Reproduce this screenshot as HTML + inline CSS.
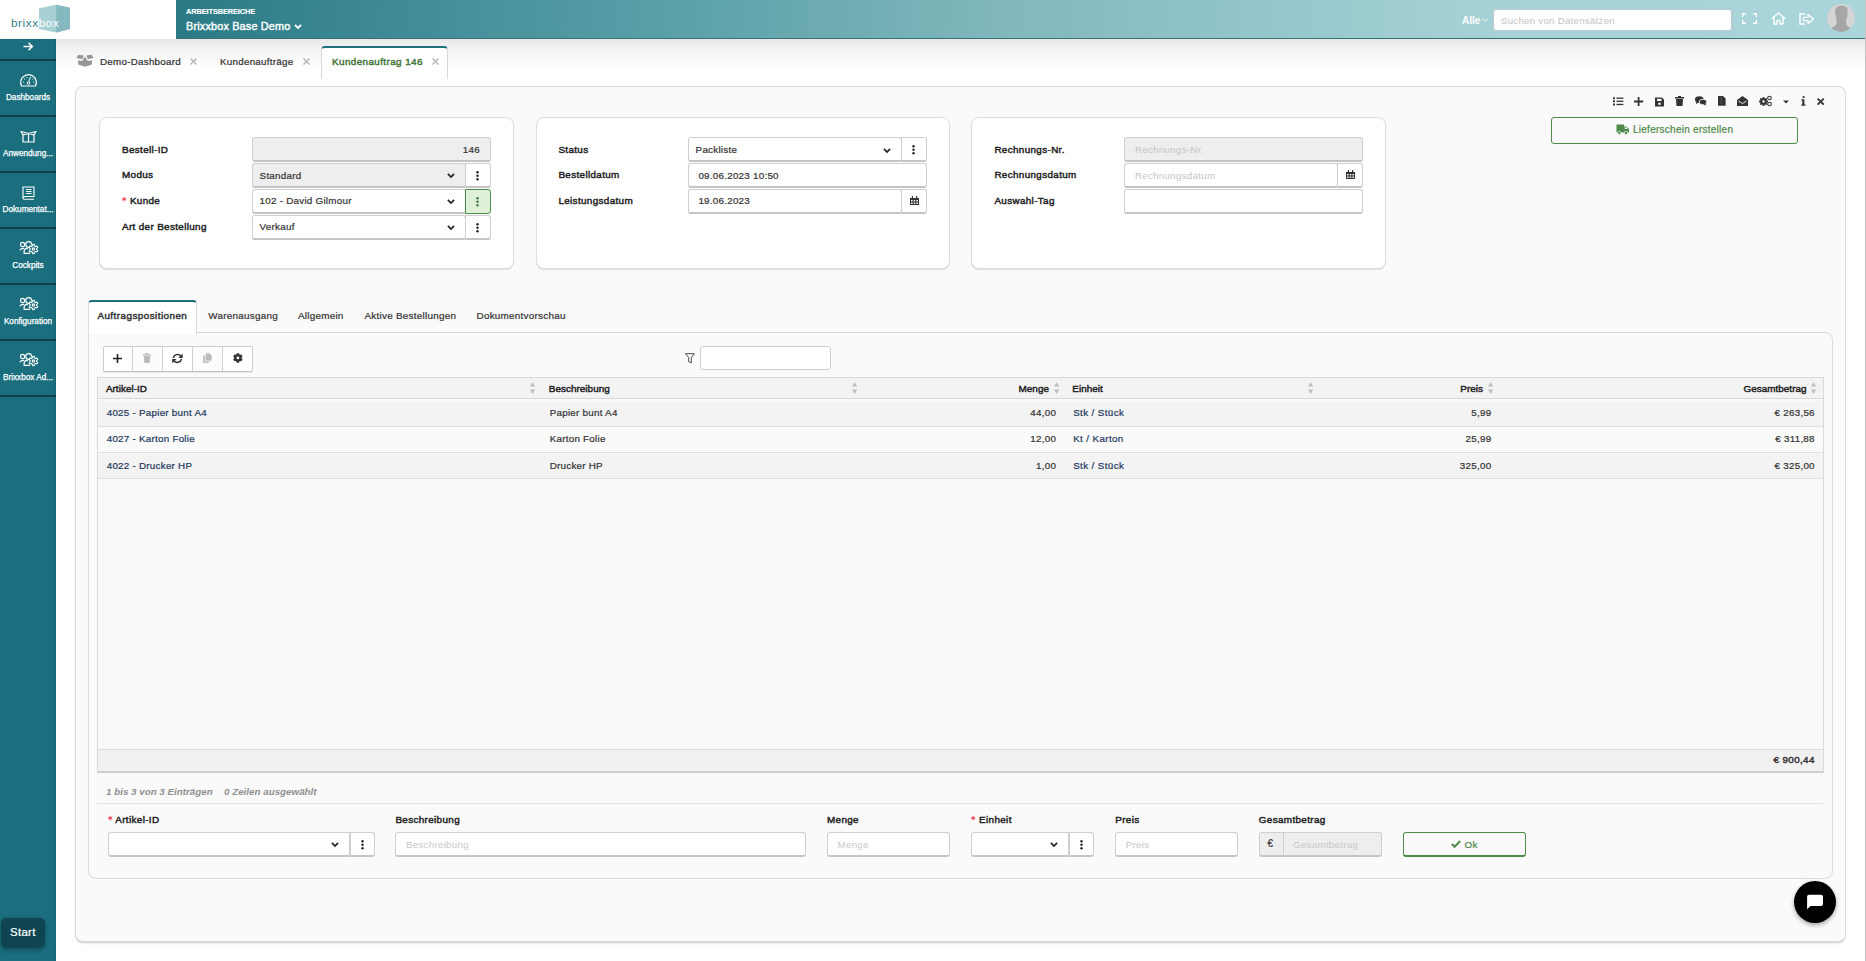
<!DOCTYPE html>
<html><head><meta charset="utf-8">
<style>
*{box-sizing:border-box;margin:0;padding:0}
html,body{width:1866px;height:961px;overflow:hidden;background:#fff;font-family:"Liberation Sans",sans-serif;color:#333;font-size:10.3px}
.a{position:absolute}
.t{position:absolute;white-space:nowrap;line-height:1}
#hdr{left:0;top:0;width:1866px;height:39px;background:linear-gradient(92deg,#2a7a86 176px,#529ba4 600px,#80b8bc 1000px,#a6d2d7 1500px,#aad5da 1866px);border-bottom:1px solid #3b6f77}
#logo{left:0;top:0;width:176px;height:39px;background:#fff}
#side{left:0;top:39px;width:56px;height:922px;background:#1a6e7e;border-right:1px solid #176777}
.sdiv{position:absolute;left:0;width:56px;height:2px;background:#0d3f4c}
.slab{position:absolute;left:0;width:56px;text-align:center;color:#fff;font-size:8.2px;white-space:nowrap;line-height:1;-webkit-text-stroke:0.25px #fff}
.sico{position:absolute;left:18px;width:20px;height:16px}
#tabbar{left:56px;top:39px;width:1810px;height:40px;background:linear-gradient(#e8e8e8,#f6f6f6 14px,#fff 30px)}
#outer{left:75px;top:86px;width:1771px;height:857px;background:#fafafa;border:1px solid #dcdcdc;border-bottom:2px solid #d8d8d8;border-radius:8px;box-shadow:0 1px 2px rgba(0,0,0,.08)}
.card{position:absolute;top:117px;width:414px;height:152px;background:#fff;border:1px solid #dedede;border-radius:8px;box-shadow:0 1px 1px rgba(0,0,0,.12)}
.lbl{position:absolute;font-weight:bold;font-size:9.7px;color:#222;white-space:nowrap;line-height:1}
.inp{position:absolute;height:25px;background:#fff;border:1px solid #cfcfcf;border-bottom:2px solid #c4c4c4;border-radius:3px}
.dis{background:#eee}
.btn{position:absolute;height:25px;width:26px;background:#fff;border:1px solid #cfcfcf;border-bottom:2px solid #c4c4c4;border-radius:0 3px 3px 0}
.ph{color:#c5c5c5}
svg{position:absolute;overflow:visible}
.t{-webkit-text-stroke:0.22px currentColor;font-size:9.8px;letter-spacing:0.26px;margin-top:-0.3px}
.lbl{font-weight:normal;font-size:9.9px;letter-spacing:0.35px;-webkit-text-stroke:0.45px currentColor}
.ph{-webkit-text-stroke:0}
.nb{-webkit-text-stroke:0;letter-spacing:0;margin-top:0}
</style></head><body>
<div id="hdr" class="a"></div>
<div id="logo" class="a">
  <svg style="left:0;top:0" width="80" height="39">
    <polygon points="39,8.3 56.2,4.7 70,7.8 70,29 56.2,32.5 39,29" fill="#a8d1d6"/>
    <polygon points="56.2,4.7 70,7.8 70,29 56.2,32.5" fill="#86b8bf"/>
  </svg>
  <div class="t nb" style="left:11px;top:17.5px;font-size:11.8px;color:#3a808c;letter-spacing:0.55px">brixx<span style="color:#fff">box</span></div>
</div>
<div class="t nb" style="left:186px;top:8px;font-size:7.4px;font-weight:bold;color:#fff;letter-spacing:-0.1px;-webkit-text-stroke:0.15px #fff">ARBEITSBEREICHE</div>
<div class="t" style="left:186px;top:21px;font-size:10.8px;letter-spacing:0.2px;color:#fff;-webkit-text-stroke:0.4px #fff">Brixxbox Base Demo</div>
<svg style="left:294px;top:23.5px" width="8" height="6"><path d="M1 1 L4 4 L7 1" stroke="#fff" stroke-width="1.8" fill="none"/></svg>

<div class="t nb" style="left:1462px;top:16.3px;font-size:10px;font-weight:bold;color:#fff">Alle</div>
<svg style="left:1482px;top:18px" width="7" height="5"><path d="M0.5 0.8 L3.2 3.5 L5.9 0.8" stroke="#fff" stroke-width="1" fill="none"/></svg>
<div class="a" style="left:1493px;top:8.8px;width:238.5px;height:22.5px;background:#fff;border:1px solid #b9c9cc;border-radius:3px"></div>
<div class="t ph" style="left:1501px;top:16.2px;font-size:9.7px;color:#c3c3c3">Suchen von Datensätzen</div>
<!-- fullscreen -->
<svg style="left:1742px;top:13px" width="15" height="11"><path d="M0.7 4 V0.7 H4 M11 0.7 H14.3 V4 M14.3 7 V10.3 H11 M4 10.3 H0.7 V7" stroke="#fff" stroke-width="1.4" fill="none"/></svg>
<!-- home -->
<svg style="left:1771px;top:12px" width="15" height="13"><path d="M1 6.5 L7.5 1 L14 6.5 M3 5 V12 H6 V8.5 H9 V12 H12 V5" stroke="#fff" stroke-width="1.4" fill="none" stroke-linejoin="round"/></svg>
<!-- sign out -->
<svg style="left:1799px;top:13px" width="16" height="12"><path d="M6 1 H1 V11 H6" stroke="#fff" stroke-width="1.4" fill="none"/><path d="M4.5 4.3 H9 V1.5 L14.5 6 L9 10.5 V7.7 H4.5 Z" stroke="#fff" stroke-width="1.3" fill="none" stroke-linejoin="round"/></svg>
<!-- avatar -->
<svg style="left:1827px;top:4px" width="28" height="28"><defs><clipPath id="avc"><circle cx="14" cy="14" r="13.9"/></clipPath></defs><circle cx="14" cy="14" r="13.9" fill="#d5d5d5"/><path clip-path="url(#avc)" d="M10 3 C12 1 18 1.2 19.8 3.5 C21 5.5 20.5 9 20.3 11 C20.8 12 20.2 13.5 19.5 14 C19.2 17 18.8 19.5 19.5 21 C20.5 22.5 22 23.2 24 24.5 L24 29 L4 29 L4 24.5 C6 23 8 22 9.3 20.5 C10 19 9.8 16.5 9.2 14.5 C8.5 12 8 9 8.3 6.5 C8.5 5 9 4 10 3 Z" fill="#a6a6a6"/></svg>

<div id="side" class="a"></div>
<svg style="left:23px;top:42px" width="11" height="9"><path d="M0.5 4.5 H9.5 M5.5 0.8 L9.3 4.5 L5.5 8.2" stroke="#fff" stroke-width="1.6" fill="none"/></svg>
<div class="sdiv" style="top:58.8px"></div>
<div class="sdiv" style="top:114.8px"></div>
<div class="sdiv" style="top:170.8px"></div>
<div class="sdiv" style="top:226.8px"></div>
<div class="sdiv" style="top:282.8px"></div>
<div class="sdiv" style="top:338.8px"></div>
<div class="sdiv" style="top:394.8px"></div>
<!-- dashboards icon -->
<svg style="left:20px;top:73.8px" width="17" height="13"><path d="M1.5 12 C0 9 0.5 4.5 3.5 2.5 C6.5 0.3 10.5 0.3 13.5 2.5 C16.5 4.5 17 9 15.5 12 Z" stroke="#fff" stroke-width="1.2" fill="none"/><circle cx="8.5" cy="9" r="1.3" stroke="#fff" stroke-width="1" fill="none"/><path d="M8.8 7.7 L10.5 3" stroke="#fff" stroke-width="1"/><circle cx="3.5" cy="8" r=".6" fill="#fff"/><circle cx="4.5" cy="5" r=".6" fill="#fff"/><circle cx="7" cy="3.5" r=".6" fill="#fff"/><circle cx="13" cy="5" r=".6" fill="#fff"/><circle cx="13.5" cy="8" r=".6" fill="#fff"/></svg>
<div class="slab" style="top:94.2px">Dashboards</div>
<!-- box icon -->
<svg style="left:20px;top:129.8px" width="17" height="13"><path d="M3 4 V12 H14 V4 M1 1.5 L8.5 3.5 L16 1.5 L14 5 L8.5 3.5 L3 5 Z M8.5 3.5 V12" stroke="#fff" stroke-width="1.2" fill="none" stroke-linejoin="round"/></svg>
<div class="slab" style="top:150.2px">Anwendung...</div>
<!-- book icon -->
<svg style="left:22px;top:185.8px" width="13" height="14"><path d="M1 12.5 V1 H12 V10.5 H3 C1.5 10.5 1 11.5 1 12.5 C1 13 1.5 13.3 3 13.3 H12 M4 3.5 H9.5 M4 5.5 H9.5 M4 7.5 H9.5" stroke="#fff" stroke-width="1.1" fill="none"/></svg>
<div class="slab" style="top:206.2px">Dokumentat...</div>
<!-- cockpits / people-cog icons -->
<svg style="left:16px;top:236px" width="26" height="22"><g stroke="#fff" stroke-width="1.15" fill="none" stroke-linecap="round" stroke-linejoin="round"><circle cx="6.6" cy="8.5" r="2.1"/><path d="M4.1 14 C4.5 12.8 5.8 12.3 7.6 12.3"/><path d="M15.6 8.6 A2.9 2.9 0 1 0 12.6 11.4"/><path d="M13.6 17.4 H8.1 V15.2 C8.1 13.4 9.5 12.3 11.6 12.3"/><path d="M16.80,8.44 L18.00,8.44 L18.66,9.95 L19.41,10.38 L21.05,10.20 L21.65,11.24 L20.67,12.57 L20.67,13.43 L21.65,14.76 L21.05,15.80 L19.41,15.62 L18.66,16.05 L18.00,17.56 L16.80,17.56 L16.14,16.05 L15.39,15.62 L13.75,15.80 L13.15,14.76 L14.13,13.43 L14.13,12.57 L13.15,11.24 L13.75,10.20 L15.39,10.38 L16.14,9.95 Z"/><circle cx="17.4" cy="13.0" r="1.2"/></g></svg>
<div class="slab" style="top:262.2px">Cockpits</div>
<svg style="left:16px;top:292px" width="26" height="22"><g stroke="#fff" stroke-width="1.15" fill="none" stroke-linecap="round" stroke-linejoin="round"><circle cx="6.6" cy="8.5" r="2.1"/><path d="M4.1 14 C4.5 12.8 5.8 12.3 7.6 12.3"/><path d="M15.6 8.6 A2.9 2.9 0 1 0 12.6 11.4"/><path d="M13.6 17.4 H8.1 V15.2 C8.1 13.4 9.5 12.3 11.6 12.3"/><path d="M16.80,8.44 L18.00,8.44 L18.66,9.95 L19.41,10.38 L21.05,10.20 L21.65,11.24 L20.67,12.57 L20.67,13.43 L21.65,14.76 L21.05,15.80 L19.41,15.62 L18.66,16.05 L18.00,17.56 L16.80,17.56 L16.14,16.05 L15.39,15.62 L13.75,15.80 L13.15,14.76 L14.13,13.43 L14.13,12.57 L13.15,11.24 L13.75,10.20 L15.39,10.38 L16.14,9.95 Z"/><circle cx="17.4" cy="13.0" r="1.2"/></g></svg>
<div class="slab" style="top:318.2px">Konfiguration</div>
<svg style="left:16px;top:348px" width="26" height="22"><g stroke="#fff" stroke-width="1.15" fill="none" stroke-linecap="round" stroke-linejoin="round"><circle cx="6.6" cy="8.5" r="2.1"/><path d="M4.1 14 C4.5 12.8 5.8 12.3 7.6 12.3"/><path d="M15.6 8.6 A2.9 2.9 0 1 0 12.6 11.4"/><path d="M13.6 17.4 H8.1 V15.2 C8.1 13.4 9.5 12.3 11.6 12.3"/><path d="M16.80,8.44 L18.00,8.44 L18.66,9.95 L19.41,10.38 L21.05,10.20 L21.65,11.24 L20.67,12.57 L20.67,13.43 L21.65,14.76 L21.05,15.80 L19.41,15.62 L18.66,16.05 L18.00,17.56 L16.80,17.56 L16.14,16.05 L15.39,15.62 L13.75,15.80 L13.15,14.76 L14.13,13.43 L14.13,12.57 L13.15,11.24 L13.75,10.20 L15.39,10.38 L16.14,9.95 Z"/><circle cx="17.4" cy="13.0" r="1.2"/></g></svg>
<div class="slab" style="top:374.2px">Brixxbox Ad...</div>
<div class="a" style="left:1px;top:918px;width:44px;height:30px;background:#0f4552;border-radius:5px;box-shadow:0 2px 5px rgba(0,0,0,.3)"></div>
<div class="t" style="left:10px;top:927px;font-size:11.5px;color:#fff">Start</div>

<div id="tabbar" class="a"></div>
<svg style="left:72px;top:50px" width="26" height="20"><g fill="#959595"><path d="M6.3 4.8 L11.7 5.6 L10.4 9.2 L4.6 7.9 Z"/><path d="M19.6 4.8 L14.4 5.6 L15.8 9.2 L21.7 7.7 Z"/><path d="M6.2 10.2 L10.3 10.9 L12.9 6.6 L15.6 10.9 L19.9 10.2 V14.6 L12.9 16.8 L6.2 14.6 Z"/></g></svg>
<div class="t" style="left:100px;top:57px;font-size:9.8px;color:#333">Demo-Dashboard</div>
<svg style="left:190px;top:58px" width="7" height="7"><path d="M0.5 0.5 L6.5 6.5 M6.5 0.5 L0.5 6.5" stroke="#b0b0b0" stroke-width="1.2"/></svg>
<div class="t" style="left:220px;top:57px;font-size:9.8px;color:#333">Kundenaufträge</div>
<svg style="left:303px;top:58px" width="7" height="7"><path d="M0.5 0.5 L6.5 6.5 M6.5 0.5 L0.5 6.5" stroke="#b0b0b0" stroke-width="1.2"/></svg>
<div class="a" style="left:321px;top:46px;width:127px;height:33px;background:#fff;border:1px solid #d8d8d8;border-top:2px solid #1f6f7d;border-bottom:none;border-radius:4px 4px 0 0"></div>
<div id="outer" class="a"></div>
<div class="t" style="left:332px;top:57px;font-size:9.9px;letter-spacing:0.4px;color:#44763a;-webkit-text-stroke:0.45px #44763a">Kundenauftrag 146</div>
<svg style="left:432px;top:58px" width="7" height="7"><path d="M0.5 0.5 L6.5 6.5 M6.5 0.5 L0.5 6.5" stroke="#b0b0b0" stroke-width="1.2"/></svg>

<!-- action icons -->
<svg style="left:1612.6px;top:97px" width="11" height="9"><g fill="#333"><rect x="0" y="0.3" width="2" height="1.9"/><rect x="0" y="3.3" width="2" height="1.9"/><rect x="0" y="6.5" width="2" height="1.9"/><rect x="3.4" y="0.55" width="7" height="1.3"/><rect x="3.4" y="3.6" width="7" height="1.3"/><rect x="3.4" y="6.8" width="7" height="1.3"/></g></svg>
<svg style="left:1634.2px;top:97px" width="9.2" height="9"><path d="M4.6 0 V9 M0 4.5 H9.2" stroke="#333" stroke-width="1.8"/></svg>
<svg style="left:1655px;top:96.8px" width="9" height="10"><path d="M0 0.5 H7 L9 2.5 V9.5 H0 Z" fill="#333"/><rect x="2" y="1.8" width="4.5" height="2.2" fill="#fafafa"/><circle cx="4.5" cy="6.8" r="1.3" fill="#fafafa"/></svg>
<svg style="left:1675px;top:96px" width="9" height="10"><rect x="0" y="1" width="9" height="1.5" fill="#333"/><rect x="3" y="0" width="3" height="1.5" fill="#333"/><path d="M1 3 H8 L7.5 10 H1.5 Z" fill="#333"/></svg>
<svg style="left:1695px;top:96px" width="12" height="10"><ellipse cx="4.3" cy="3.5" rx="4.3" ry="3.2" fill="#333"/><path d="M1.5 5.5 L0.8 8 L4 6.5Z" fill="#333"/><ellipse cx="8" cy="6" rx="3.8" ry="2.8" fill="#333" stroke="#fafafa" stroke-width="0.8"/><path d="M10 7.5 L11.5 9.8 L8.5 8.5Z" fill="#333"/></svg>
<svg style="left:1718.3px;top:96px" width="8" height="10"><path d="M0 0 H5 L7.6 2.6 V9.8 H0 Z" fill="#333"/><path d="M3.2 0.8 V8.5" stroke="#888" stroke-width="0.7" stroke-dasharray="0.9 0.6"/></svg>
<svg style="left:1737px;top:96px" width="11" height="10"><path d="M0 4 L5.5 0 L11 4 V10 H0 Z" fill="#333"/><path d="M1.5 5 L5.5 7.5 L9.5 5" stroke="#fafafa" stroke-width="0.9" fill="none"/></svg>
<svg style="left:1759px;top:96px" width="13" height="10"><g fill="#333"><circle cx="4.5" cy="5.5" r="3.3"/><rect x="3.6" y="1" width="1.8" height="9"/><rect x="0" y="4.6" width="9" height="1.8"/><rect x="3.6" y="1" width="1.8" height="9" transform="rotate(45 4.5 5.5)"/><rect x="3.6" y="1" width="1.8" height="9" transform="rotate(-45 4.5 5.5)"/></g><circle cx="4.5" cy="5.5" r="1.2" fill="#fafafa"/><circle cx="10.5" cy="2" r="1.8" fill="none" stroke="#333" stroke-width="1.1"/><circle cx="10.5" cy="8" r="1.8" fill="none" stroke="#333" stroke-width="1.1"/></svg>
<svg style="left:1783px;top:100px" width="7" height="4"><path d="M0 0.5 H6 L3 3.5Z" fill="#333"/></svg>
<svg style="left:1801.2px;top:96px" width="5" height="10"><circle cx="2.6" cy="1.1" r="1.1" fill="#333"/><path d="M0.3 3.3 H3.4 V8.6 H4.4 V9.8 H0.3 V8.6 H1.3 V4.5 H0.3 Z" fill="#333"/></svg>
<svg style="left:1816.7px;top:97.9px" width="7.4" height="7.2"><path d="M0.6 0.6 L6.8 6.6 M6.8 0.6 L0.6 6.6" stroke="#333" stroke-width="1.8"/></svg>

<div class="a" style="left:1551px;top:117px;width:247px;height:27px;border:1px solid #4e8a49;border-radius:3px;background:#fafafa"></div>
<svg style="left:1616px;top:124px" width="14" height="11"><path d="M0.5 0.5 H8 V2.5 H10.5 L13 5 V8.5 H0.5 Z" fill="#4e8a49"/><path d="M8.8 3.3 H10.2 L11.8 5 H8.8Z" fill="#fafafa"/><circle cx="3.3" cy="9" r="1.7" fill="#4e8a49" stroke="#fafafa" stroke-width="0.7"/><circle cx="10" cy="9" r="1.7" fill="#4e8a49" stroke="#fafafa" stroke-width="0.7"/></svg>
<div class="t" style="left:1633px;top:125px;font-size:10px;color:#4e8a49">Lieferschein erstellen</div>

<!-- cards -->
<div class="card" style="left:99.3px;width:414.5px"></div>
<div class="card" style="left:535.5px;width:414px"></div>
<div class="card" style="left:971.2px;width:414.8px"></div>
<div class="lbl" style="left:122px;top:144.52px">Bestell-ID</div>
<div class="inp dis" style="left:252.4px;top:137.2px;width:238.5px"></div>
<div class="t" style="left:252.4px;width:227.5px;text-align:right;top:145.20px;color:#333">146</div>
<div class="lbl" style="left:122px;top:170.22px">Modus</div>
<div class="inp dis" style="left:252.4px;top:162.9px;width:213.5px"></div>
<div class="t" style="left:259.6px;top:170.90px;color:#333">Standard</div>
<svg style="left:447px;top:173.20000000000002px" width="8" height="6"><path d="M0.9 0.9 L4 4 L7.1 0.9" stroke="#222" stroke-width="1.7" fill="none"/></svg>
<div class="btn" style="left:465.4px;top:162.9px;background:#fff;border-color:#cfcfcf;border-bottom:2px solid #c4c4c4"></div>
<svg style="left:476.4px;top:170.9px" width="3" height="10"><circle cx="1.5" cy="1.3" r="1.2" fill="#222"/><circle cx="1.5" cy="4.8" r="1.2" fill="#222"/><circle cx="1.5" cy="8.3" r="1.2" fill="#222"/></svg>
<svg style="left:122px;top:197.40px" width="4.4" height="4.4"><g stroke="#ee2a3f" stroke-width="0.85"><path d="M2.2 0 V4.4"/><path d="M0.2 1.2 L4.2 3.2"/><path d="M4.2 1.2 L0.2 3.2"/></g></svg>
<div class="lbl" style="left:129.9px;top:195.92px">Kunde</div>
<div class="inp " style="left:252.4px;top:188.6px;width:213.5px"></div>
<div class="t" style="left:259.6px;top:196.60px;color:#333">102 - David Gilmour</div>
<svg style="left:447px;top:198.9px" width="8" height="6"><path d="M0.9 0.9 L4 4 L7.1 0.9" stroke="#222" stroke-width="1.7" fill="none"/></svg>
<div class="btn" style="left:465.4px;top:188.6px;background:#dff0d8;border-color:#4b8b47;border-bottom:1px solid #4b8b47"></div>
<svg style="left:476.4px;top:196.6px" width="3" height="10"><circle cx="1.5" cy="1.3" r="1.2" fill="#3c763d"/><circle cx="1.5" cy="4.8" r="1.2" fill="#3c763d"/><circle cx="1.5" cy="8.3" r="1.2" fill="#3c763d"/></svg>
<div class="lbl" style="left:122px;top:221.82px">Art der Bestellung</div>
<div class="inp " style="left:252.4px;top:214.5px;width:213.5px"></div>
<div class="t" style="left:259.6px;top:222.50px;color:#333">Verkauf</div>
<svg style="left:447px;top:224.8px" width="8" height="6"><path d="M0.9 0.9 L4 4 L7.1 0.9" stroke="#222" stroke-width="1.7" fill="none"/></svg>
<div class="btn" style="left:465.4px;top:214.5px;background:#fff;border-color:#cfcfcf;border-bottom:2px solid #c4c4c4"></div>
<svg style="left:476.4px;top:222.5px" width="3" height="10"><circle cx="1.5" cy="1.3" r="1.2" fill="#222"/><circle cx="1.5" cy="4.8" r="1.2" fill="#222"/><circle cx="1.5" cy="8.3" r="1.2" fill="#222"/></svg>
<div class="lbl" style="left:558.4px;top:144.52px">Status</div>
<div class="inp " style="left:688.4px;top:137.2px;width:213.5px"></div>
<div class="t" style="left:695.6px;top:145.20px;color:#333">Packliste</div>
<svg style="left:883px;top:147.5px" width="8" height="6"><path d="M0.9 0.9 L4 4 L7.1 0.9" stroke="#222" stroke-width="1.7" fill="none"/></svg>
<div class="btn" style="left:901.4px;top:137.2px;background:#fff;border-color:#cfcfcf;border-bottom:2px solid #c4c4c4"></div>
<svg style="left:912.4px;top:145.2px" width="3" height="10"><circle cx="1.5" cy="1.3" r="1.2" fill="#222"/><circle cx="1.5" cy="4.8" r="1.2" fill="#222"/><circle cx="1.5" cy="8.3" r="1.2" fill="#222"/></svg>
<div class="lbl" style="left:558.4px;top:170.22px">Bestelldatum</div>
<div class="inp " style="left:688.4px;top:162.9px;width:238.5px"></div>
<div class="t" style="left:698.4px;top:170.90px;color:#333">09.06.2023 10:50</div>
<div class="lbl" style="left:558.4px;top:195.92px">Leistungsdatum</div>
<div class="inp " style="left:688.4px;top:188.6px;width:213.5px"></div>
<div class="t" style="left:698.4px;top:196.60px;color:#333">19.06.2023</div>
<div class="btn" style="left:901.4px;top:188.6px"></div>
<svg style="left:909.9px;top:196.1px" width="9" height="9"><path d="M0 2 H9 V9 H0 Z" fill="#333"/><rect x="1.8" y="0" width="1.2" height="2.5" fill="#333"/><rect x="6" y="0" width="1.2" height="2.5" fill="#333"/><g fill="#fff"><rect x="1" y="4" width="1.6" height="1.4"/><rect x="3.7" y="4" width="1.6" height="1.4"/><rect x="6.4" y="4" width="1.6" height="1.4"/><rect x="1" y="6.5" width="1.6" height="1.4"/><rect x="3.7" y="6.5" width="1.6" height="1.4"/><rect x="6.4" y="6.5" width="1.6" height="1.4"/></g></svg>
<div class="lbl" style="left:994.4px;top:144.52px">Rechnungs-Nr.</div>
<div class="inp dis" style="left:1124.4px;top:137.2px;width:238.5px"></div>
<div class="t ph" style="left:1134.9px;top:145.20px;color:#c5c5c5">Rechnungs-Nr.</div>
<div class="lbl" style="left:994.4px;top:170.22px">Rechnungsdatum</div>
<div class="inp " style="left:1124.4px;top:162.9px;width:213.5px"></div>
<div class="t ph" style="left:1134.9px;top:170.90px;color:#c5c5c5">Rechnungsdatum</div>
<div class="btn" style="left:1337.4px;top:162.9px"></div>
<svg style="left:1345.9px;top:170.4px" width="9" height="9"><path d="M0 2 H9 V9 H0 Z" fill="#333"/><rect x="1.8" y="0" width="1.2" height="2.5" fill="#333"/><rect x="6" y="0" width="1.2" height="2.5" fill="#333"/><g fill="#fff"><rect x="1" y="4" width="1.6" height="1.4"/><rect x="3.7" y="4" width="1.6" height="1.4"/><rect x="6.4" y="4" width="1.6" height="1.4"/><rect x="1" y="6.5" width="1.6" height="1.4"/><rect x="3.7" y="6.5" width="1.6" height="1.4"/><rect x="6.4" y="6.5" width="1.6" height="1.4"/></g></svg>
<div class="lbl" style="left:994.4px;top:195.92px">Auswahl-Tag</div>
<div class="inp " style="left:1124.4px;top:188.6px;width:238.5px"></div><div class="a" style="left:88px;top:332px;width:1745px;height:547px;border:1px solid #dcdcdc;border-top:1px solid #dadada;border-radius:0 8px 8px 8px;background:#fafafa"></div>
<div class="a" style="left:88px;top:300px;width:109px;height:33.5px;background:#fff;border:1px solid #dadada;border-top:2.6px solid #1f6f7d;border-bottom:none;border-radius:4px 4px 0 0"></div>
<div class="t" style="left:97.4px;top:311px;font-size:9.9px;letter-spacing:0.45px;color:#333;-webkit-text-stroke:0.45px #333">Auftragspositionen</div>
<div class="t" style="left:208.3px;top:311.00px;font-size:9.9px;color:#333">Warenausgang</div>
<div class="t" style="left:297.9px;top:311.00px;font-size:9.9px;color:#333">Allgemein</div>
<div class="t" style="left:364.5px;top:311.00px;font-size:9.9px;color:#333">Aktive Bestellungen</div>
<div class="t" style="left:476.5px;top:311.00px;font-size:9.9px;color:#333">Dokumentvorschau</div>
<div class="a" style="left:103.4px;top:346.2px;width:150.1px;height:26.3px;border:1px solid #cccccc;border-bottom:1px solid #c4c4c4;box-shadow:0 1px 0 #e6e6e6;border-radius:2px;background:#fff;overflow:hidden"><div class="a" style="left:27.6px;top:0;width:1.2px;height:26px;background:#d0d0d0"></div><div class="a" style="left:28.8px;top:0;width:29px;height:26px;background:#fcfcfc"></div><div class="a" style="left:57.7px;top:0;width:1.2px;height:26px;background:#d0d0d0"></div><div class="a" style="left:87.8px;top:0;width:1.2px;height:26px;background:#d0d0d0"></div><div class="a" style="left:89px;top:0;width:28.5px;height:26px;background:#fcfcfc"></div><div class="a" style="left:117.8px;top:0;width:1.2px;height:26px;background:#d0d0d0"></div></div>
<svg style="left:113.3px;top:353.8px" width="9" height="9"><path d="M4.5 0 V9 M0 4.5 H9" stroke="#222" stroke-width="1.6"/></svg>
<svg style="left:143px;top:353px" width="8" height="10"><rect x="0" y="1.2" width="8" height="1.3" fill="#bbb"/><rect x="2.6" y="0" width="2.8" height="1.5" fill="#bbb"/><path d="M0.8 3 H7.2 L6.7 10 H1.3 Z" fill="#bbb"/></svg>
<svg style="left:172px;top:352.6px" width="11" height="11"><path d="M1.3 5.0 A4.3 4.3 0 0 1 8.9 3.1" stroke="#333" stroke-width="1.45" fill="none"/><path d="M10.7 0.6 V5.0 H6.3 Z" fill="#333"/><path d="M9.5 5.9 A4.3 4.3 0 0 1 1.9 7.8" stroke="#333" stroke-width="1.45" fill="none"/><path d="M0.2 10.3 V5.9 H4.6 Z" fill="#333"/></svg>
<svg style="left:203px;top:353px" width="9" height="10"><rect x="0" y="2.5" width="6" height="7.5" fill="#c4c4c4"/><path d="M2.5 0 H6.5 L9 2.5 V8 H2.5 Z" fill="#bbb" stroke="#fafafa" stroke-width="0.6"/></svg>
<svg style="left:233px;top:353.2px" width="10" height="10"><path d="M3.15,1.75 L3.71,0.15 L6.09,0.15 L6.65,1.75 L6.75,1.81 L8.42,1.50 L9.61,3.55 L8.50,4.84 L8.50,4.96 L9.61,6.25 L8.42,8.30 L6.75,7.99 L6.65,8.05 L6.09,9.65 L3.71,9.65 L3.15,8.05 L3.05,7.99 L1.38,8.30 L0.19,6.25 L1.30,4.96 L1.30,4.84 L0.19,3.55 L1.38,1.50 L3.05,1.81 Z" fill="#333"/><circle cx="4.9" cy="4.9" r="1.35" fill="#fff"/></svg>
<svg style="left:685px;top:352.8px" width="10" height="11"><path d="M0.6 0.7 H9.4 L6.3 4.6 V9.8 L3.7 8.8 V4.6 Z" stroke="#444" stroke-width="0.95" fill="none" stroke-linejoin="round"/></svg>
<div class="a" style="left:700.4px;top:346.3px;width:130.4px;height:23.3px;background:#fff;border:1px solid #cfcfcf;border-radius:3px"></div>
<div class="a" style="left:97.3px;top:377.2px;width:1726.4px;height:395.4px;border:1px solid #d9d9d9;border-bottom:2px solid #cfcfcf;background:#f9f9f9"></div>
<div class="a" style="left:98.3px;top:378.2px;width:1724.4px;height:21px;background:#f3f3f3;border-bottom:1.3px solid #d7d7d7"></div>
<div class="a" style="left:98.3px;top:400.8px;width:1724.4px;height:26.20px;background:#f3f3f3;border-bottom:1.3px solid #dedede"></div>
<div class="a" style="left:98.3px;top:428.0px;width:1724.4px;height:25.20px;background:#fafafa;border-bottom:1.3px solid #dedede"></div>
<div class="a" style="left:98.3px;top:454.2px;width:1724.4px;height:25.20px;background:#f3f3f3;border-bottom:1.3px solid #dedede"></div>
<div class="a" style="left:98.3px;top:748.8px;width:1724.4px;height:22.4px;background:#f1f1f1;border-top:1px solid #dcdcdc"></div>
<div class="lbl" style="left:105.9px;top:383.62px;letter-spacing:0.05px">Artikel-ID</div>
<svg style="left:530.3px;top:382.3px" width="6" height="13"><path d="M0 4.6 L2.6 0.3 L5.2 4.6 Z" fill="#bdbdbd"/><path d="M0 7.6 L2.6 11.9 L5.2 7.6 Z" fill="#bdbdbd"/></svg>
<div class="lbl" style="left:548.8px;top:383.62px;letter-spacing:0.05px">Beschreibung</div>
<svg style="left:852.1px;top:382.3px" width="6" height="13"><path d="M0 4.6 L2.6 0.3 L5.2 4.6 Z" fill="#bdbdbd"/><path d="M0 7.6 L2.6 11.9 L5.2 7.6 Z" fill="#bdbdbd"/></svg>
<div class="lbl" style="left:849px;width:200px;text-align:right;top:383.62px;letter-spacing:0.05px">Menge</div>
<svg style="left:1054.2px;top:382.3px" width="6" height="13"><path d="M0 4.6 L2.6 0.3 L5.2 4.6 Z" fill="#bdbdbd"/><path d="M0 7.6 L2.6 11.9 L5.2 7.6 Z" fill="#bdbdbd"/></svg>
<div class="lbl" style="left:1072.3px;top:383.62px;letter-spacing:0.05px">Einheit</div>
<svg style="left:1308.1000000000001px;top:382.3px" width="6" height="13"><path d="M0 4.6 L2.6 0.3 L5.2 4.6 Z" fill="#bdbdbd"/><path d="M0 7.6 L2.6 11.9 L5.2 7.6 Z" fill="#bdbdbd"/></svg>
<div class="lbl" style="left:1283px;width:200px;text-align:right;top:383.62px;letter-spacing:0.05px">Preis</div>
<svg style="left:1488.0px;top:382.3px" width="6" height="13"><path d="M0 4.6 L2.6 0.3 L5.2 4.6 Z" fill="#bdbdbd"/><path d="M0 7.6 L2.6 11.9 L5.2 7.6 Z" fill="#bdbdbd"/></svg>
<div class="lbl" style="left:1606.6px;width:200px;text-align:right;top:383.62px;letter-spacing:0.05px">Gesamtbetrag</div>
<svg style="left:1811.0px;top:382.3px" width="6" height="13"><path d="M0 4.6 L2.6 0.3 L5.2 4.6 Z" fill="#bdbdbd"/><path d="M0 7.6 L2.6 11.9 L5.2 7.6 Z" fill="#bdbdbd"/></svg>
<div class="t" style="left:106.7px;top:408.40px;color:#23395d">4025 - Papier bunt A4</div>
<div class="t" style="left:549.7px;top:408.40px;color:#333">Papier bunt A4</div>
<div class="t" style="left:856.2px;width:200px;text-align:right;top:408.40px;color:#333">44,00</div>
<div class="t" style="left:1073.2px;top:408.40px;color:#23395d;letter-spacing:0.38px">Stk / Stück</div>
<div class="t" style="left:1291.4px;width:200px;text-align:right;top:408.40px;color:#333">5,99</div>
<div class="t" style="left:1614.8px;width:200px;text-align:right;top:408.40px;color:#333">€ 263,56</div>
<div class="t" style="left:106.7px;top:434.60px;color:#23395d">4027 - Karton Folie</div>
<div class="t" style="left:549.7px;top:434.60px;color:#333">Karton Folie</div>
<div class="t" style="left:856.2px;width:200px;text-align:right;top:434.60px;color:#333">12,00</div>
<div class="t" style="left:1073.2px;top:434.60px;color:#23395d;letter-spacing:0.38px">Kt / Karton</div>
<div class="t" style="left:1291.4px;width:200px;text-align:right;top:434.60px;color:#333">25,99</div>
<div class="t" style="left:1614.8px;width:200px;text-align:right;top:434.60px;color:#333">€ 311,88</div>
<div class="t" style="left:106.7px;top:460.80px;color:#23395d">4022 - Drucker HP</div>
<div class="t" style="left:549.7px;top:460.80px;color:#333">Drucker HP</div>
<div class="t" style="left:856.2px;width:200px;text-align:right;top:460.80px;color:#333">1,00</div>
<div class="t" style="left:1073.2px;top:460.80px;color:#23395d;letter-spacing:0.38px">Stk / Stück</div>
<div class="t" style="left:1291.4px;width:200px;text-align:right;top:460.80px;color:#333">325,00</div>
<div class="t" style="left:1614.8px;width:200px;text-align:right;top:460.80px;color:#333">€ 325,00</div>
<div class="t" style="left:1614.8px;width:200px;text-align:right;top:755.10px;font-size:9.9px;letter-spacing:0.35px;color:#333;-webkit-text-stroke:0.45px #333">€ 900,44</div>
<div class="t" style="left:106px;top:787.3px;font-size:9.8px;font-weight:bold;font-style:italic;color:#8f8f8f;-webkit-text-stroke:0;letter-spacing:0">1 bis 3 von 3 Einträgen</div>
<div class="t" style="left:224px;top:787.3px;font-size:9.8px;font-weight:bold;font-style:italic;color:#8f8f8f;-webkit-text-stroke:0;letter-spacing:0">0 Zeilen ausgewählt</div>
<div class="a" style="left:97.4px;top:802.6px;width:1726px;height:1px;background:#dfdfdf"></div>
<svg style="left:107.5px;top:816.10px" width="4.4" height="4.4"><g stroke="#ee2a3f" stroke-width="0.85"><path d="M2.2 0 V4.4"/><path d="M0.2 1.2 L4.2 3.2"/><path d="M4.2 1.2 L0.2 3.2"/></g></svg>
<div class="lbl" style="left:115.3px;top:814.62px">Artikel-ID</div>
<div class="a" style="left:108.4px;top:831.9px;width:241.6px;height:25px;background:#fff;border:1px solid #cfcfcf;border-bottom:2px solid #c6c6c6;border-radius:3px 0 0 3px"></div>
<svg style="left:331px;top:842.1999999999999px" width="8" height="6"><path d="M0.9 0.9 L4 4 L7.1 0.9" stroke="#222" stroke-width="1.7" fill="none"/></svg>
<div class="a" style="left:349.7px;top:831.9px;width:25.5px;height:25px;background:#fff;border:1px solid #cfcfcf;border-bottom:2px solid #c6c6c6;border-radius:0 3px 3px 0"></div>
<svg style="left:360.9px;top:839.9px" width="3" height="10"><circle cx="1.5" cy="1.3" r="1.2" fill="#222"/><circle cx="1.5" cy="4.8" r="1.2" fill="#222"/><circle cx="1.5" cy="8.3" r="1.2" fill="#222"/></svg>
<div class="lbl" style="left:395.4px;top:814.62px">Beschreibung</div>
<div class="a" style="left:395.4px;top:831.9px;width:410.6px;height:25px;background:#fff;border:1px solid #cfcfcf;border-bottom:2px solid #c6c6c6;border-radius:3px"></div>
<div class="t ph" style="left:405.9px;top:840.00px;color:#c8c8c8">Beschreibung</div>
<div class="lbl" style="left:827px;top:814.62px">Menge</div>
<div class="a" style="left:827px;top:831.9px;width:122.5px;height:25px;background:#fff;border:1px solid #cfcfcf;border-bottom:2px solid #c6c6c6;border-radius:3px"></div>
<div class="t ph" style="left:837.5px;top:840.00px;color:#c8c8c8">Menge</div>
<svg style="left:971.3px;top:816.10px" width="4.4" height="4.4"><g stroke="#ee2a3f" stroke-width="0.85"><path d="M2.2 0 V4.4"/><path d="M0.2 1.2 L4.2 3.2"/><path d="M4.2 1.2 L0.2 3.2"/></g></svg>
<div class="lbl" style="left:979.0999999999999px;top:814.62px">Einheit</div>
<div class="a" style="left:971.3px;top:831.9px;width:97.8px;height:25px;background:#fff;border:1px solid #cfcfcf;border-bottom:2px solid #c6c6c6;border-radius:3px 0 0 3px"></div>
<svg style="left:1050px;top:842.1999999999999px" width="8" height="6"><path d="M0.9 0.9 L4 4 L7.1 0.9" stroke="#222" stroke-width="1.7" fill="none"/></svg>
<div class="a" style="left:1068.9px;top:831.9px;width:25.5px;height:25px;background:#fff;border:1px solid #cfcfcf;border-bottom:2px solid #c6c6c6;border-radius:0 3px 3px 0"></div>
<svg style="left:1080.1000000000001px;top:839.9px" width="3" height="10"><circle cx="1.5" cy="1.3" r="1.2" fill="#222"/><circle cx="1.5" cy="4.8" r="1.2" fill="#222"/><circle cx="1.5" cy="8.3" r="1.2" fill="#222"/></svg>
<div class="lbl" style="left:1115.3px;top:814.62px">Preis</div>
<div class="a" style="left:1115.3px;top:831.9px;width:122.3px;height:25px;background:#fff;border:1px solid #cfcfcf;border-bottom:2px solid #c6c6c6;border-radius:3px"></div>
<div class="t ph" style="left:1125.8px;top:840.00px;color:#c8c8c8">Preis</div>
<div class="lbl" style="left:1258.8px;top:814.62px">Gesamtbetrag</div>
<div class="a" style="left:1258.8px;top:831.9px;width:123px;height:25px;background:#eee;border:1px solid #cfcfcf;border-bottom:2px solid #c6c6c6;border-radius:3px"></div>
<div class="a" style="left:1283px;top:831.9px;width:1px;height:24px;background:#cfcfcf"></div>
<div class="t" style="left:1267.5px;top:839.60px;font-size:10px;letter-spacing:0;color:#333">€</div>
<div class="t ph" style="left:1293px;top:840.00px;color:#c8c8c8">Gesamtbetrag</div>
<div class="a" style="left:1403.2px;top:831.9px;width:122.5px;height:25px;border:1px solid #4e8a49;border-bottom:2px solid #4e8a49;border-radius:3px;background:#fafafa"></div>
<svg style="left:1451px;top:840.4px" width="10" height="8"><path d="M0.8 4 L3.6 6.8 L9.2 1" stroke="#4e8a49" stroke-width="2" fill="none"/></svg>
<div class="t" style="left:1464.5px;top:840.00px;color:#4e8a49">Ok</div>
<div class="a" style="left:1794px;top:881px;width:42px;height:42px;border-radius:50%;background:#000;box-shadow:0 2px 4px rgba(0,0,0,.35)"></div>
<svg style="left:1806px;top:893px" width="18" height="17"><path d="M3 1.7 H15 Q17 1.7 17 3.7 V10.9 Q17 12.9 15 12.9 H4.5 L1.1 16.2 V3.7 Q1.1 1.7 3 1.7 Z" fill="#fff"/></svg>
<div class="a" style="left:1865px;top:0;width:1px;height:961px;background:#c2c2c2"></div></body></html>
